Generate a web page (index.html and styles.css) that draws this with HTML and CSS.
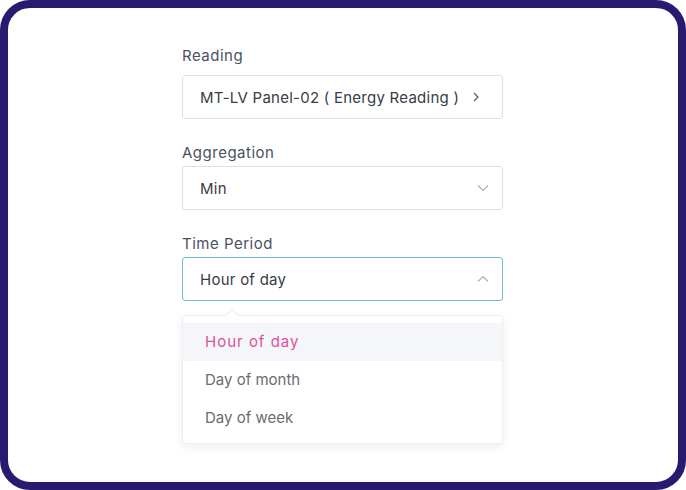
FILE: index.html
```html
<!DOCTYPE html>
<html>
<head>
<meta charset="utf-8">
<link rel="stylesheet" href="styles.css">
</head>
<body>
<div class="frame">
  <form class="form">
    <div class="field field-first">
      <label class="label">Reading</label>
      <div class="box">
        <span class="value">MT-LV Panel-02 ( Energy Reading )</span>
        <svg class="chev chev-right" width="10" height="10" viewBox="0 0 10 10"><path d="M3 1 L7 5 L3 9" fill="none" stroke="#555b66" stroke-width="1.2"/></svg>
      </div>
    </div>
    <div class="field">
      <label class="label">Aggregation</label>
      <div class="box">
        <span class="value">Min</span>
        <svg class="chev" width="12" height="8" viewBox="0 0 12 8"><path d="M1 1.5 L6 6.5 L11 1.5" fill="none" stroke="#a6b0c0" stroke-width="1.2"/></svg>
      </div>
    </div>
    <div class="field">
      <label class="label">Time Period</label>
      <div class="select-wrap">
        <div class="box box-open">
          <span class="value">Hour of day</span>
          <svg class="chev" width="12" height="8" viewBox="0 0 12 8"><path d="M1 6.5 L6 1.5 L11 6.5" fill="none" stroke="#a6b0c0" stroke-width="1.2"/></svg>
        </div>
        <ul class="menu">
          <li class="item item-active">Hour of day</li>
          <li class="item">Day of month</li>
          <li class="item">Day of week</li>
        </ul>
      </div>
    </div>
  </form>
</div>
</body>
</html>
```
FILE: styles.css
```css
* { box-sizing: border-box; }
html, body { margin: 0; padding: 0; background: #ffffff; }
body { font-family: Inter, "Noto Sans", sans-serif; }
.frame {
  width: 686px;
  height: 490px;
  border: 8px solid #271b70;
  border-radius: 30px;
  background: #ffffff;
  padding: 38px 0 0 174px;
}
.form { width: 321px; }
.field { margin-top: 24px; }
.field-first { margin-top: 0; }
.label {
  display: block;
  font-size: 15px;
  line-height: 20px;
  letter-spacing: 0.5px;
  color: #4a5262;
  margin-bottom: 3px;
}
.field-first .label { margin-bottom: 9px; }
.box {
  height: 44px;
  border: 1px solid #dde1e7;
  border-radius: 3px;
  display: flex;
  align-items: center;
  justify-content: space-between;
  padding: 0 13px 0 17px;
  font-size: 15px;
  letter-spacing: 0.25px;
  color: #383c44;
}
.box-open { border-color: #6fbfca; }
.chev-right { margin-right: 8px; }
.select-wrap { position: relative; }
.menu {
  position: absolute;
  top: calc(100% + 14px);
  left: 0;
  width: 321px;
  margin: 0;
  padding: 7px 0 6px;
  list-style: none;
  background: #ffffff;
  border: 1px solid #eceef2;
  border-radius: 3px;
  box-shadow: 0 3px 10px rgba(0, 0, 0, 0.07);
}
.menu::before {
  content: "";
  position: absolute;
  top: -5px;
  left: 44px;
  width: 9px;
  height: 9px;
  background: #ffffff;
  border-top: 1px solid #eceef2;
  border-left: 1px solid #eceef2;
  transform: rotate(45deg);
}
.item {
  height: 38px;
  line-height: 38px;
  padding-left: 22px;
  font-size: 15px;
  color: #6a6c72;
  position: relative;
}
.item-active {
  background: #f5f6fa;
  color: #e0509a;
  letter-spacing: 1px;
}
```
